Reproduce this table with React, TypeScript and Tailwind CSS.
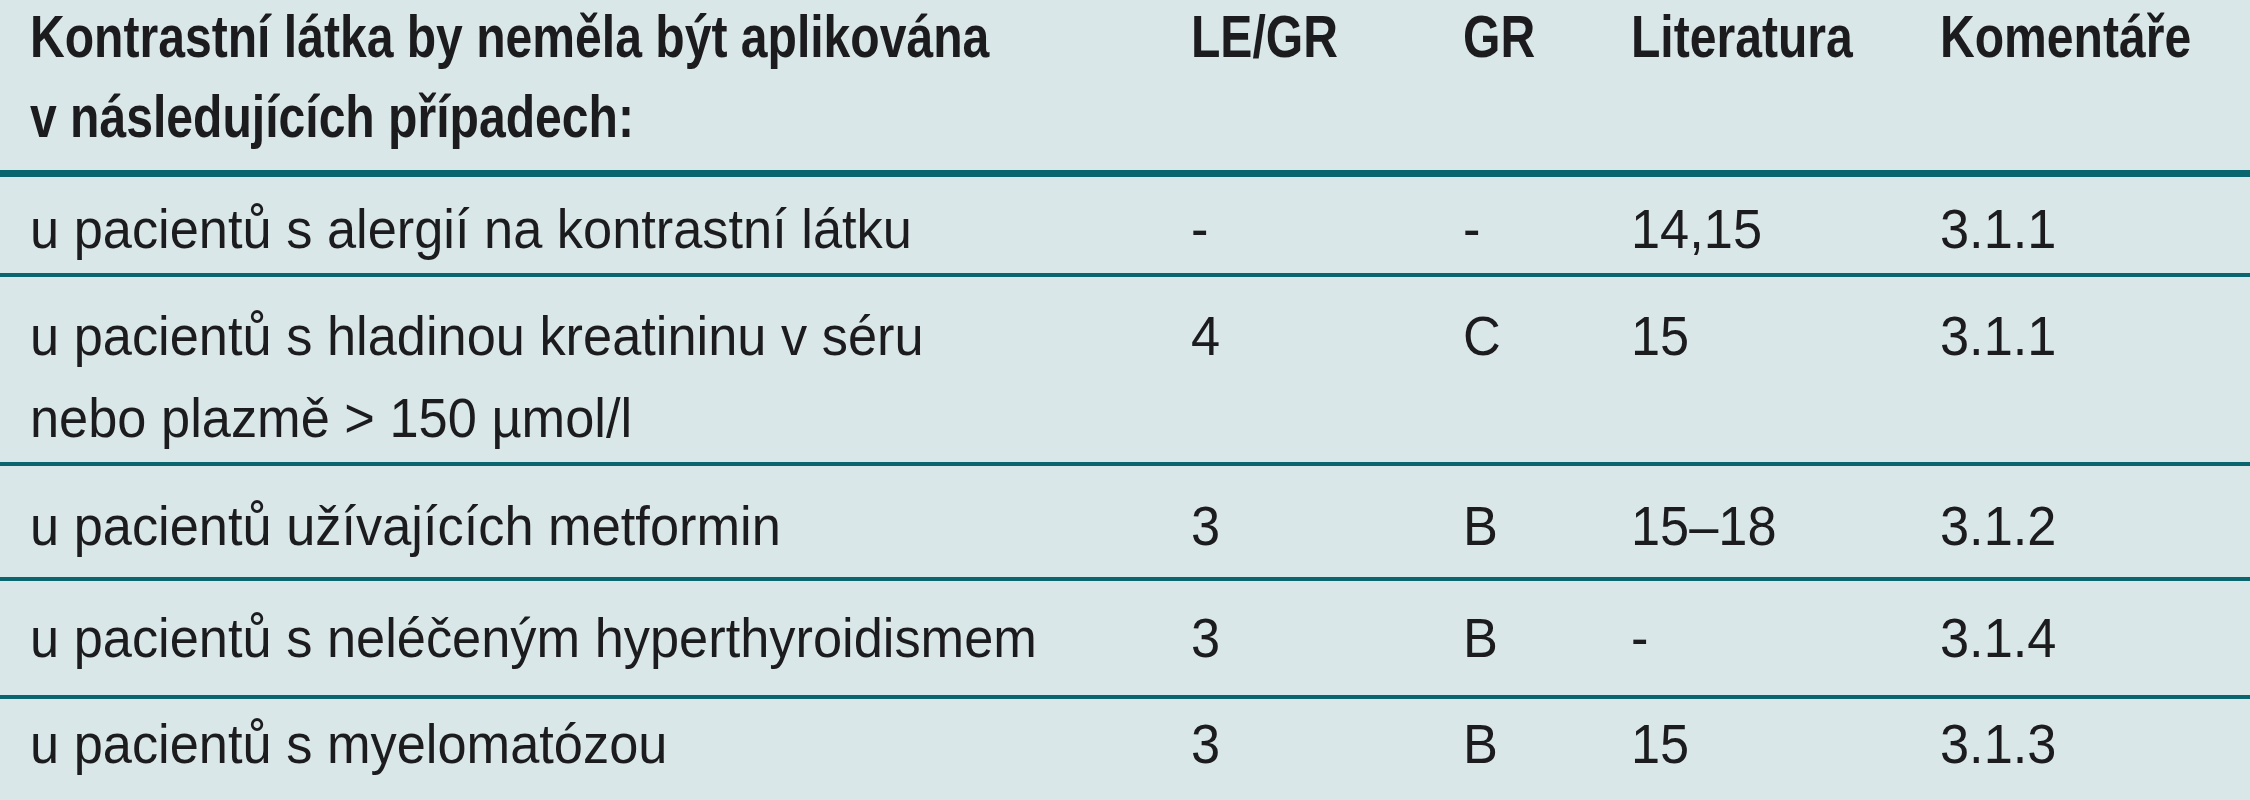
const head = ["LE/GR", "GR", "Literatura", "Komentáře"];

const rows = [
  {
    label: ["u pacientů s alergií na kontrastní látku"],
    cells: ["-", "-", "14,15", "3.1.1"],
    pad: "pt-[11px] pb-[3px] border-b-4",
  },
  {
    label: ["u pacientů s hladinou kreatininu v séru", "nebo plazmě > 150 µmol/l"],
    cells: ["4", "C", "15", "3.1.1"],
    pad: "pt-[18px] pb-[3px] border-b-4",
  },
  {
    label: ["u pacientů užívajících metformin"],
    cells: ["3", "B", "15–18", "3.1.2"],
    pad: "pt-[19px] pb-[10px] border-b-4",
  },
  {
    label: ["u pacientů s neléčeným hyperthyroidismem"],
    cells: ["3", "B", "-", "3.1.4"],
    pad: "pt-[16px] pb-[16px] border-b-4",
  },
  {
    label: ["u pacientů s myelomatózou"],
    cells: ["3", "B", "15", "3.1.3"],
    pad: "pt-[4px] pb-[20px]",
  },
];

const cols = "grid grid-cols-[1161px_272px_168px_309px_1fr] pl-[30px]";

function Txt({ children, bold }: { children: React.ReactNode; bold?: boolean }) {
  return (
    <span
      className={
        bold
          ? "inline-block origin-left scale-x-[0.815] whitespace-nowrap"
          : "inline-block origin-left scale-x-[0.935] whitespace-nowrap"
      }
    >
      {children}
    </span>
  );
}

export default function App() {
  return (
    <div className="w-[2250px] h-[800px] overflow-hidden bg-[#dae7e9] text-[#1c1c1e] font-['Liberation_Sans',Arial,sans-serif]">
      <div className={`${cols} h-[177px] border-b-[7px] border-[#0a666e] text-[59px] leading-[80px] font-bold`}>
        <div className="-mt-[3px]">
          <Txt bold>Kontrastní látka by neměla být aplikována</Txt>
          <br />
          <Txt bold>v následujících případech:</Txt>
        </div>
        {head.map((h) => (
          <div key={h} className="-mt-[3px]">
            <Txt bold>{h}</Txt>
          </div>
        ))}
      </div>
      {rows.map((r, i) => (
        <div key={i} className={`${cols} ${r.pad} border-[#0a666e] text-[56px] leading-[82px]`}>
          <div>
            {r.label.map((l) => (
              <div key={l}>
                <Txt>{l}</Txt>
              </div>
            ))}
          </div>
          {r.cells.map((c, j) => (
            <div key={j}>
              <Txt>{c}</Txt>
            </div>
          ))}
        </div>
      ))}
    </div>
  );
}
